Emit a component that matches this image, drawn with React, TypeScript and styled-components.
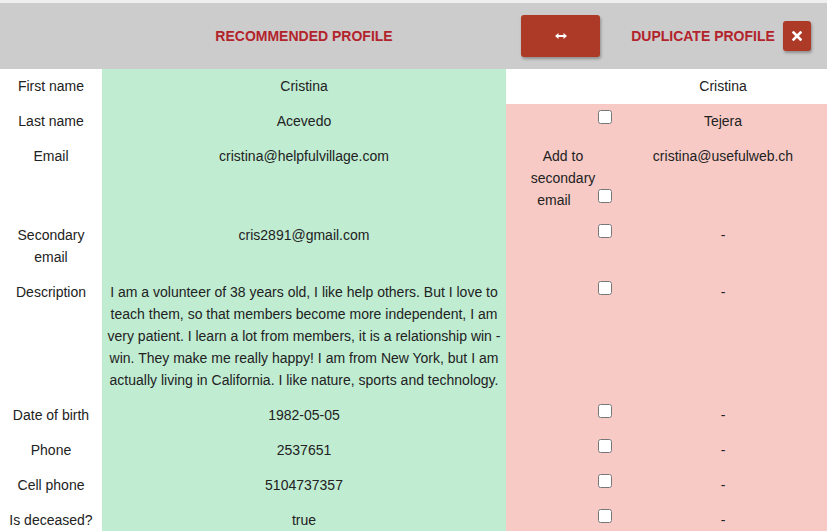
import styled, { createGlobalStyle } from "styled-components";

const GlobalStyle = createGlobalStyle`
  html, body {
    margin: 0;
    padding: 0;
    background: #efefef;
  }
  body {
    font-family: "Liberation Sans", Arial, sans-serif;
    font-size: 14px;
    color: #222;
  }
`;

const Page = styled.div`
  padding-top: 3px;
  width: 827px;
  background: #efefef;
`;

const Table = styled.table`
  width: 827px;
  border-collapse: collapse;
  table-layout: fixed;
`;

const HeadRow = styled.tr`
  background: #cccccc;
  height: 66px;
`;

const HeadCell = styled.th<{ $shift?: number }>`
  padding: 0 ${(p) => p.$shift ?? 0}px 0 0;
  vertical-align: middle;
  text-align: center;
  font-size: 14px;
  font-weight: bold;
  color: #b3232b;
  text-transform: uppercase;
  white-space: nowrap;
`;

const DuplicateTitle = styled.div`
  display: flex;
  align-items: center;
  justify-content: center;
  gap: 8px;
  padding-right: 4px;
`;

const SwapButton = styled.button`
  width: 79px;
  height: 42px;
  border: none;
  border-radius: 3px;
  background: #ad3a26;
  box-shadow: 1px 2px 3px rgba(0, 0, 0, 0.3);
  display: inline-flex;
  align-items: center;
  justify-content: center;
  padding: 0;
  cursor: pointer;
  vertical-align: middle;
`;

const CloseButton = styled.button`
  width: 28px;
  height: 30px;
  border: none;
  border-radius: 3px;
  background: #ad3a26;
  box-shadow: 1px 2px 3px rgba(0, 0, 0, 0.3);
  display: inline-flex;
  align-items: center;
  justify-content: center;
  padding: 0;
  cursor: pointer;
`;

const Row = styled.tr``;

type Tone = "plain" | "good" | "diff";

const toneColor: Record<Tone, string> = {
  plain: "#ffffff",
  good: "#c0ecd2",
  diff: "#f7cac6",
};

const Cell = styled.td<{ $tone: Tone }>`
  background: ${(p) => toneColor[p.$tone]};
  padding: 6px 5px 7px;
  line-height: 22px;
  text-align: center;
  vertical-align: top;
  word-wrap: break-word;
`;

const PickCell = styled(Cell)`
  padding: 6px 7px 7px 8px;
`;

const Pick = styled.input.attrs({ type: "checkbox" })`
  float: right;
  width: 14px;
  height: 14px;
  margin: 0 0 0 4px;
`;

type Field = {
  label: string;
  recommended: string;
  duplicate: string;
  same?: boolean;
  hint?: string;
};

const fields: Field[] = [
  { label: "First name", recommended: "Cristina", duplicate: "Cristina", same: true },
  { label: "Last name", recommended: "Acevedo", duplicate: "Tejera" },
  {
    label: "Email",
    recommended: "cristina@helpfulvillage.com",
    duplicate: "cristina@usefulweb.ch",
    hint: "Add to secondary email",
  },
  { label: "Secondary email", recommended: "cris2891@gmail.com", duplicate: "-" },
  {
    label: "Description",
    recommended:
      "I am a volunteer of 38 years old, I like help others. But I love to teach them, so that members become more independent, I am very patient. I learn a lot from members, it is a relationship win - win. They make me really happy! I am from New York, but I am actually living in California. I like nature, sports and technology.",
    duplicate: "-",
  },
  { label: "Date of birth", recommended: "1982-05-05", duplicate: "-" },
  { label: "Phone", recommended: "2537651", duplicate: "-" },
  { label: "Cell phone", recommended: "5104737357", duplicate: "-" },
  { label: "Is deceased?", recommended: "true", duplicate: "-" },
];

const SwapIcon = () => (
  <svg width="12" height="6" viewBox="0 0 12 6">
    <path d="M3 3h6" stroke="#fff" strokeWidth="2" />
    <path d="M0 3l3.5-3v6z M12 3l-3.5-3v6z" fill="#fff" />
  </svg>
);

const CloseIcon = () => (
  <svg width="10" height="10" viewBox="0 0 10 10">
    <path d="M1.5 1.5l7 7M8.5 1.5l-7 7" stroke="#fff" strokeWidth="2.6" strokeLinecap="square" />
  </svg>
);

export default function App() {
  return (
    <Page>
      <GlobalStyle />
      <Table>
        <colgroup>
          <col style={{ width: 102 }} />
          <col style={{ width: 404 }} />
          <col style={{ width: 113 }} />
          <col style={{ width: 208 }} />
        </colgroup>
        <thead>
          <HeadRow>
            <HeadCell />
            <HeadCell>Recommended profile</HeadCell>
            <HeadCell $shift={4}>
              <SwapButton aria-label="Swap profiles">
                <SwapIcon />
              </SwapButton>
            </HeadCell>
            <HeadCell>
              <DuplicateTitle>
                Duplicate profile
                <CloseButton aria-label="Close">
                  <CloseIcon />
                </CloseButton>
              </DuplicateTitle>
            </HeadCell>
          </HeadRow>
        </thead>
        <tbody>
          {fields.map((f) => (
            <Row key={f.label}>
              <Cell $tone="plain">{f.label}</Cell>
              <Cell $tone="good">{f.recommended}</Cell>
              <PickCell $tone={f.same ? "plain" : "diff"}>
                {f.hint}
                {!f.same && <Pick />}
              </PickCell>
              <Cell $tone={f.same ? "plain" : "diff"}>{f.duplicate}</Cell>
            </Row>
          ))}
        </tbody>
      </Table>
    </Page>
  );
}
